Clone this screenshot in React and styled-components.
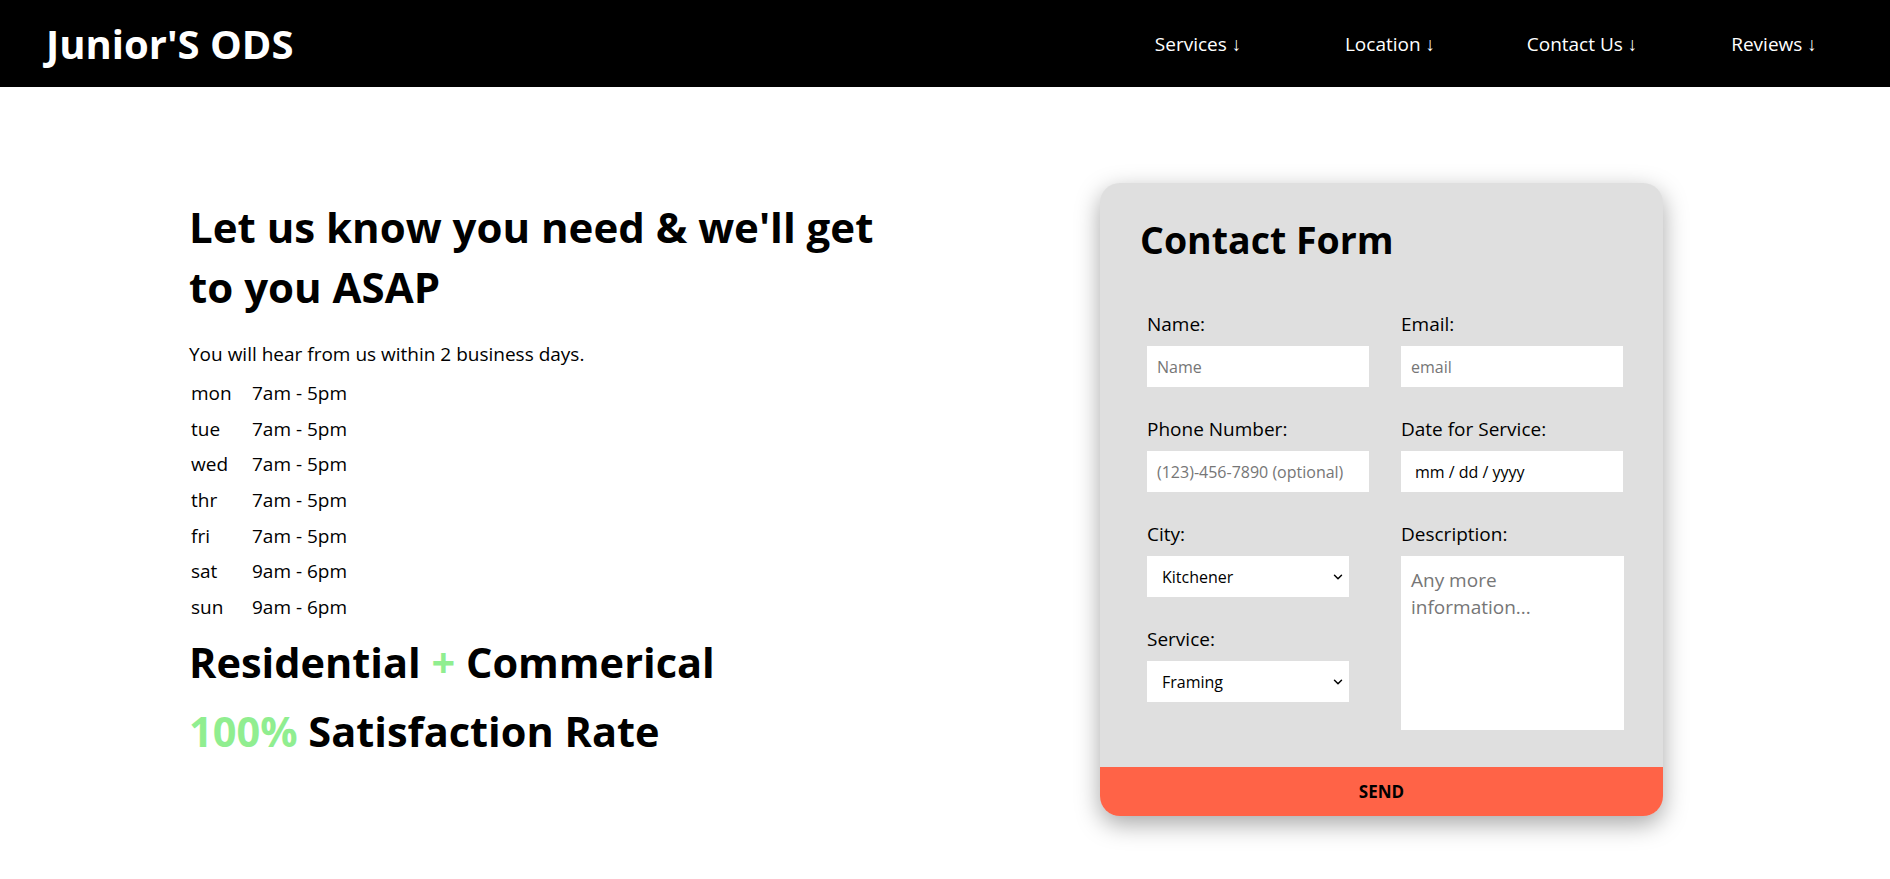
import React from "react";
import styled, { createGlobalStyle } from "styled-components";
import { ChevronDown } from "lucide-react";

const GlobalStyle = createGlobalStyle`
  * { box-sizing: border-box; }
  body {
    margin: 0;
    font-family: "Open Sans", "Noto Sans", sans-serif;
    color: #000;
    background: #fff;
  }
`;

const TopBar = styled.header`
  display: flex;
  align-items: center;
  justify-content: space-between;
  height: 87px;
  background-color: #000;
  padding: 0 20px 0 46px;
`;

const Logo = styled.h1`
  margin: 0;
  color: #fff;
  font-size: 40px;
  font-weight: 700;
`;

const NavList = styled.nav`
  display: flex;
`;

const NavItem = styled.a`
  width: 192px;
  text-align: center;
  color: #fff;
  font-size: 19px;
  text-decoration: none;
`;

const Main = styled.main`
  display: flex;
  justify-content: space-between;
  align-items: flex-start;
  padding: 96px 227px 60px 189px;
`;

const Intro = styled.section`
  width: 720px;
  padding-top: 14px;
`;

const Heading = styled.h2`
  margin: 0 0 24px;
  font-size: 42px;
  line-height: 60px;
  font-weight: 700;
`;

const Note = styled.p`
  margin: 0 0 8px;
  font-size: 19px;
  line-height: 26px;
`;

const Hours = styled.table`
  border-collapse: collapse;
  font-size: 19px;
  margin-left: 2px;
`;

const Cell = styled.td`
  height: 35.7px;
  padding: 0;
  width: ${(p) => (p.$day ? "61px" : "auto")};
`;

const Tagline = styled.p`
  margin: ${(p) => (p.$first ? "3px 0 0" : "0")};
  font-size: 41.5px;
  line-height: 69px;
  font-weight: 700;
`;

const Green = styled.span`
  color: #90ee90;
`;

const Card = styled.form`
  width: 563px;
  background: #dfdfdf;
  border-radius: 20px;
  overflow: hidden;
  box-shadow: 0 8px 24px rgba(0, 0, 0, 0.35);
`;

const CardBody = styled.div`
  padding: 33px 41px 37px 47px;
`;

const CardTitle = styled.h2`
  margin: 0 0 48px -7px;
  font-size: 37.5px;
  line-height: 48px;
  font-weight: 700;
`;

const Columns = styled.div`
  display: grid;
  grid-template-columns: 254px 223px;
`;

const Column = styled.div`
  display: flex;
  flex-direction: column;
  gap: 30px;
`;

const Field = styled.label`
  display: flex;
  flex-direction: column;
  gap: 10px;
`;

const LabelText = styled.span`
  font-size: 19px;
  line-height: 24px;
`;

const TextInput = styled.input`
  width: 222px;
  height: 41px;
  border: none;
  outline: none;
  background: #fff;
  padding: 0 10px 0 ${(p) => (p.$wide ? "14px" : "10px")};
  font-family: inherit;
  font-size: 16px;
  color: #000;
  &::placeholder {
    color: #767676;
  }
`;

const SelectWrap = styled.div`
  position: relative;
  width: 202px;
  height: 41px;
`;

const Select = styled.select`
  appearance: none;
  width: 100%;
  height: 100%;
  border: none;
  outline: none;
  background: #fff;
  padding: 0 24px 0 15px;
  font-family: inherit;
  font-size: 16px;
  color: #000;
`;

const Chevron = styled(ChevronDown)`
  position: absolute;
  right: 4px;
  top: 14px;
  pointer-events: none;
`;

const TextArea = styled.textarea`
  width: 223px;
  height: 174px;
  border: none;
  outline: none;
  resize: none;
  background: #fff;
  padding: 11px 10px;
  font-family: inherit;
  font-size: 19px;
  line-height: 27px;
  &::placeholder {
    color: #767676;
  }
`;

const SendButton = styled.button`
  display: block;
  width: 100%;
  height: 49px;
  border: none;
  background: #ff6347;
  font-family: inherit;
  font-size: 17px;
  font-weight: 700;
  color: #000;
  cursor: pointer;
`;

const hours = [
  ["mon", "7am - 5pm"],
  ["tue", "7am - 5pm"],
  ["wed", "7am - 5pm"],
  ["thr", "7am - 5pm"],
  ["fri", "7am - 5pm"],
  ["sat", "9am - 6pm"],
  ["sun", "9am - 6pm"],
];

export default function App() {
  return (
    <>
      <GlobalStyle />
      <TopBar>
        <Logo>Junior'S ODS</Logo>
        <NavList>
          <NavItem href="#services">Services ↓</NavItem>
          <NavItem href="#location">Location ↓</NavItem>
          <NavItem href="#contact">Contact Us ↓</NavItem>
          <NavItem href="#reviews">Reviews ↓</NavItem>
        </NavList>
      </TopBar>
      <Main>
        <Intro>
          <Heading>
            Let us know you need &amp; we'll get
            <br />
            to you ASAP
          </Heading>
          <Note>You will hear from us within 2 business days.</Note>
          <Hours>
            <tbody>
              {hours.map(([day, time]) => (
                <tr key={day}>
                  <Cell $day>{day}</Cell>
                  <Cell>{time}</Cell>
                </tr>
              ))}
            </tbody>
          </Hours>
          <Tagline $first>
            Residential <Green>+</Green> Commerical
          </Tagline>
          <Tagline>
            <Green>100%</Green> Satisfaction Rate
          </Tagline>
        </Intro>
        <Card onSubmit={(e) => e.preventDefault()}>
          <CardBody>
            <CardTitle>Contact Form</CardTitle>
            <Columns>
              <Column>
                <Field>
                  <LabelText>Name:</LabelText>
                  <TextInput type="text" placeholder="Name" />
                </Field>
                <Field>
                  <LabelText>Phone Number:</LabelText>
                  <TextInput type="text" placeholder="(123)-456-7890 (optional)" />
                </Field>
                <Field>
                  <LabelText>City:</LabelText>
                  <SelectWrap>
                    <Select defaultValue="Kitchener">
                      <option>Kitchener</option>
                      <option>Waterloo</option>
                      <option>Cambridge</option>
                    </Select>
                    <Chevron size={14} strokeWidth={2.5} />
                  </SelectWrap>
                </Field>
                <Field>
                  <LabelText>Service:</LabelText>
                  <SelectWrap>
                    <Select defaultValue="Framing">
                      <option>Framing</option>
                      <option>Drywall</option>
                      <option>Roofing</option>
                    </Select>
                    <Chevron size={14} strokeWidth={2.5} />
                  </SelectWrap>
                </Field>
              </Column>
              <Column>
                <Field>
                  <LabelText>Email:</LabelText>
                  <TextInput type="email" placeholder="email" />
                </Field>
                <Field>
                  <LabelText>Date for Service:</LabelText>
                  <TextInput type="text" $wide defaultValue="mm / dd / yyyy" />
                </Field>
                <Field>
                  <LabelText>Description:</LabelText>
                  <TextArea placeholder={"Any more\ninformation..."} />
                </Field>
              </Column>
            </Columns>
          </CardBody>
          <SendButton type="submit">SEND</SendButton>
        </Card>
      </Main>
    </>
  );
}
